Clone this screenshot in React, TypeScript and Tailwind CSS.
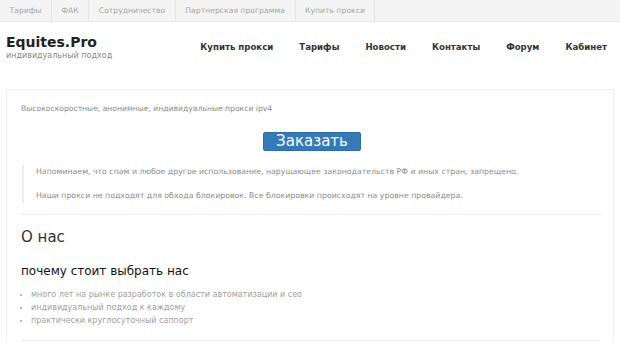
import React from "react";

const font = { fontFamily: '"DejaVu Sans", "Noto Sans", sans-serif' };

export default function App() {
  const top = ["Тарифы", "ФАК", "Сотрудничество", "Партнерская программа", "Купить прокси"];
  const nav = ["Купить прокси", "Тарифы", "Новости", "Контакты", "Форум", "Кабинет"];
  return (
    <div className="w-[620px] h-[343px] overflow-hidden bg-white" style={font}>
      <div className="flex h-[22px] bg-[#f4f4f4] border-b border-[#e9e9e9]">
        {top.map((t) => (
          <div key={t} className="px-[9.5px] flex items-center text-[7.7px] text-[#a5a5a5] border-r border-[#e4e4e4]">
            {t}
          </div>
        ))}
      </div>
      <div className="flex items-start justify-between pl-[6px] pr-[13px] pt-[12px] h-[67px]">
        <div>
          <div className="text-[14px] font-bold text-[#222] leading-[17px]">Equites.Pro</div>
          <div className="text-[8px] text-[#888] leading-[10px]">индивидуальный подход</div>
        </div>
        <div className="flex gap-[26px] text-[8.6px] font-bold text-[#333] leading-[12px] pt-[7px]">
          {nav.map((n) => (
            <span key={n}>{n}</span>
          ))}
        </div>
      </div>
      <div className="ml-[6px] w-[608px] border border-[#f0f0f0] px-[14px] pt-[14px] h-[300px]">
        <p className="text-[7.65px] text-[#8a8a8a] leading-[10px]">
          Высокоскоростные, анонимные, индивидуальные прокси ipv4
        </p>
        <div className="flex justify-center mt-[18px] ml-[4px]">
          <div className="w-[98px] h-[19px] bg-[#337ab7] border border-[#2e6da4] rounded-[2px] text-white text-[15px] leading-[17px] text-center">
            Заказать
          </div>
        </div>
        <div className="mt-[14px] border-l-[2px] border-[#eee] pl-[12px] pt-[2px] pb-[2px] ml-[1px] text-[7.8px] text-[#8a8a8a] leading-[10px]">
          <p>Напоминаем, что спам и любое другое использование, нарушающее законодательств РФ и иных стран, запрещено.</p>
          <p className="mt-[14px]">Наши прокси не подходят для обхода блокировок. Все блокировки происходят на уровне провайдера.</p>
        </div>
        <div className="mt-[11px] w-[580px] border-t border-[#eee]" />
        <h2 className="mt-[13px] text-[15px] text-[#333] leading-[18px]">О нас</h2>
        <h3 className="mt-[17px] text-[12px] text-[#111] leading-[16px]">почему стоит выбрать нас</h3>
        <ul className="mt-[9px] text-[8px] text-[#a0a0a0] leading-[13px] list-disc pl-[10px]">
          <li>много лет на рынке разработок в области автоматизации и сео</li>
          <li>индивидуальный подход к каждому</li>
          <li>практически круглосуточный саппорт</li>
        </ul>
        <div className="mt-[13px] w-[580px] border-t border-[#eee]" />
      </div>
    </div>
  );
}
